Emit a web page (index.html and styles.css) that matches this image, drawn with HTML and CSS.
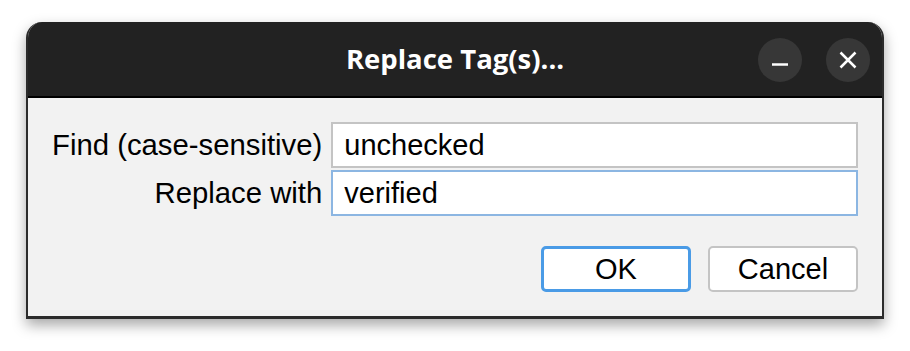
FILE: index.html
```html
<!DOCTYPE html>
<html lang="en">
<head>
    <meta charset="UTF-8">
    <title>Replace Tag(s)...</title>
    <link rel="stylesheet" href="styles.css">
</head>
<body>
    <div class="window">
        <div class="titlebar">
            <span class="title">Replace Tag(s)...</span>
            <div class="controls">
                <button class="ctrl" aria-label="Minimize">
                    <svg width="44" height="44" viewBox="0 0 44 44"><path d="M14 26.5h16" stroke="#fff" stroke-width="2.5"/></svg>
                </button>
                <button class="ctrl" aria-label="Close">
                    <svg width="44" height="44" viewBox="0 0 44 44"><path d="M14.5 14.5l15 15M29.5 14.5l-15 15" stroke="#fff" stroke-width="2.5"/></svg>
                </button>
            </div>
        </div>
        <div class="content">
            <div class="form">
                <label for="find">Find (case-sensitive)</label>
                <input id="find" class="field" type="text" value="unchecked">
                <label for="repl">Replace with</label>
                <input id="repl" class="field focused" type="text" value="verified">
            </div>
            <div class="actions">
                <button class="btn default">OK</button>
                <button class="btn">Cancel</button>
            </div>
        </div>
    </div>
</body>
</html>
```

FILE: styles.css
```css
html, body {
    height: 100%;
}

body {
    margin: 0;
    padding-top: 22px;
    box-sizing: border-box;
    background-color: #ffffff;
    font-family: "Liberation Sans", Arial, sans-serif;
}

.window {
    margin-left: 26px;
    width: 858px;
    height: 297px;
    box-sizing: border-box;
    border: 2px solid #2b2b2b;
    border-top: none;
    border-bottom-width: 3px;
    border-radius: 16px 16px 0 0;
    background-color: #f2f2f2;
    box-shadow: 0 6px 14px rgba(0, 0, 0, 0.35);
    display: flex;
    flex-direction: column;
    overflow: hidden;
}

.titlebar {
    height: 74px;
    background-color: #222222;
    border-bottom: 2px solid #000;
    margin: 0 -2px;
    position: relative;
    display: flex;
    align-items: center;
    justify-content: center;
}

.title {
    color: #ffffff;
    font-family: "Open Sans", "Noto Sans", sans-serif;
    font-weight: bold;
    font-size: 27.5px;
    margin-top: -2px;
}

.controls {
    position: absolute;
    right: 14px;
    top: 16px;
    display: flex;
    gap: 24px;
}

.ctrl {
    width: 44px;
    height: 44px;
    padding: 0;
    border: none;
    border-radius: 50%;
    background-color: #373737;
    display: block;
}

.ctrl svg {
    display: block;
}

.content {
    flex: 1;
    padding: 24px 24px 0 24px;
}

.form {
    display: grid;
    grid-template-columns: auto 1fr;
    column-gap: 9px;
    row-gap: 2px;
    align-items: center;
}

label {
    text-align: right;
    font-size: 29.3px;
    color: #000;
}

.field {
    height: 46px;
    box-sizing: border-box;
    border: 2px solid #c4c4c4;
    background-color: #fff;
    font-family: "Liberation Sans", Arial, sans-serif;
    font-size: 29px;
    padding: 0 11px;
    color: #000;
    outline: none;
}

.field.focused {
    border-color: #8cb6e2;
}

.actions {
    display: flex;
    justify-content: flex-end;
    gap: 17px;
    margin-top: 30px;
}

.btn {
    width: 150px;
    height: 46px;
    box-sizing: border-box;
    border: 2px solid #c4c4c4;
    border-radius: 5px;
    background-color: #fff;
    font-family: "Liberation Sans", Arial, sans-serif;
    font-size: 29px;
    color: #000;
}

.btn.default {
    border: 3px solid #4a9be6;
}
```
